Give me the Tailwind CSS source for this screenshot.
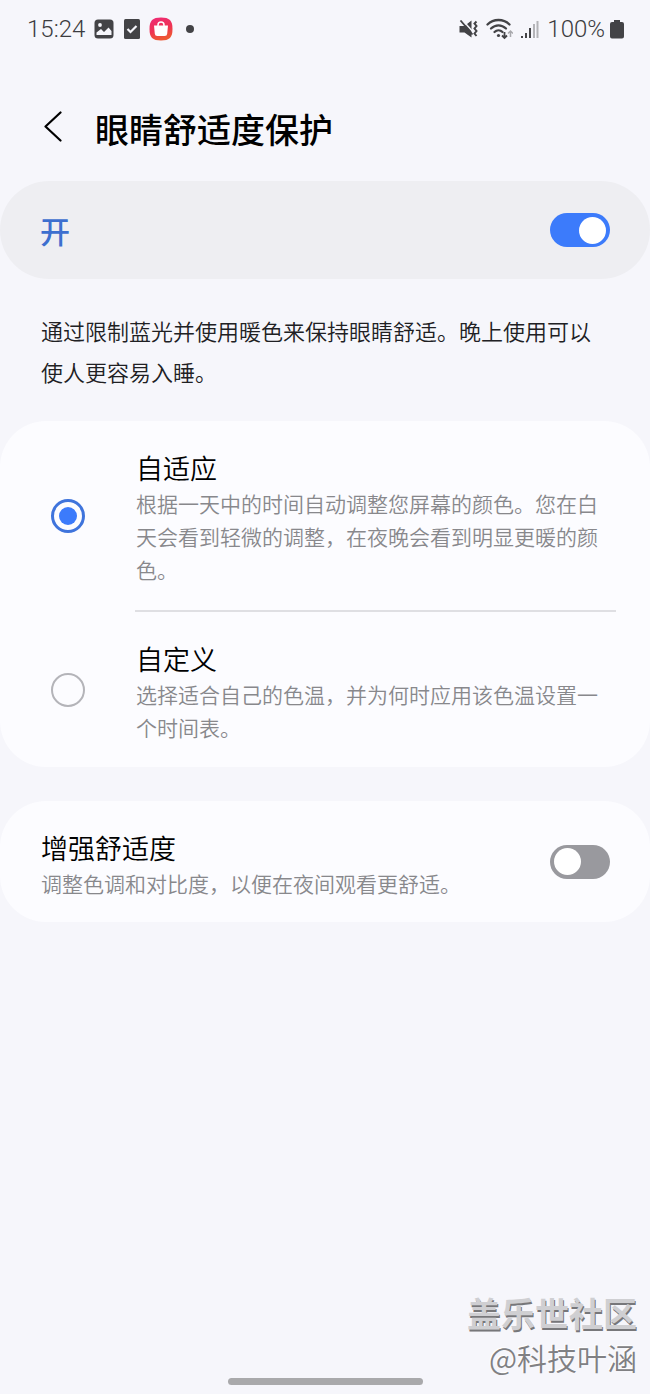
<!DOCTYPE html>
<html lang="zh-CN">
<head>
  <meta charset="UTF-8" />
  <meta name="viewport" content="width=device-width, initial-scale=1" />
  <title>眼睛舒适度保护</title>
  <script src="https://cdn.jsdelivr.net/npm/@tailwindcss/browser@4"></script>
</head>
<body class="bg-[#f6f6fb] min-h-screen flex flex-col text-black font-['Noto_Sans_CJK_SC',sans-serif]">
  <!-- Status bar -->
  <div class="h-[58px] pl-[27px] pr-[26px] flex items-center justify-between text-[#3c3c3f] font-['Roboto',sans-serif] text-2xl font-light">
    <div class="flex items-center">
      <span class="mr-[9px]">15:24</span>
      <svg class="w-5 h-5 mr-[9px]" viewBox="0 0 20 20">
        <rect x="0.500" y="0.500" width="19" height="19" rx="3.500" fill="#434346" />
        <circle cx="6" cy="6" r="1.900" fill="#f6f6fb" />
        <path d="M2.500 16v-2.500L7 10l3 3 4.500-4.500L17.500 12v4z" fill="#f6f6fb" />
      </svg>
      <svg class="w-[18px] h-5 mr-2" viewBox="0 0 18 20">
        <rect x="1" y="0" width="16" height="20" rx="1.500" fill="#434346" />
        <path d="M4.500 10l3 3L13.500 7" fill="none" stroke="#f6f6fb" stroke-width="2.200" />
      </svg>
      <svg class="w-6 h-6 mr-[13px]" viewBox="0 0 24 24">
        <defs>
          <linearGradient id="store" x1="0" y1="0" x2="0.300" y2="1">
            <stop offset="0" stop-color="#ef2a78" />
            <stop offset="0.600" stop-color="#ee3353" />
            <stop offset="1" stop-color="#ee5733" />
          </linearGradient>
        </defs>
        <path d="M12 .5C3.500.5.5 3.500.5 12S3.500 23.500 12 23.500 23.500 20.500 23.500 12 20.500.5 12 .5z" fill="url(#store)" />
        <path d="M9 9.500V8a3 3 0 0 1 6 0v1.500" fill="none" stroke="#fff" stroke-width="1.500" />
        <path d="M5 8.500h14l-.8 8.200a2.500 2.500 0 0 1-2.500 2.300H8.300a2.500 2.500 0 0 1-2.500-2.300z" fill="#fff" />
      </svg>
      <span class="w-2 h-2 rounded-full bg-[#434346]"></span>
    </div>
    <div class="flex items-center">
      <svg class="w-5 h-[18px] mr-[7px]" viewBox="0 0 20 18">
        <path d="M0.500 6h5L12.500 0.500v17L5.500 12.500h-5z" fill="#434346" />
        <path d="M3.500 0l11 12.500" stroke="#f6f6fb" stroke-width="1.500" />
        <path d="M1.500 0.500l12 14" stroke="#434346" stroke-width="1.800" />
        <path d="M17.500 1.500l-2 2 2 2.500-2 2.500 2 2.500-2 2.500 2 2.500" fill="none" stroke="#434346" stroke-width="2" />
      </svg>
      <svg class="w-[27px] h-[22px] mr-[7px]" viewBox="0 0 27 22">
        <g fill="none" stroke="#434346" stroke-width="2.300" stroke-linecap="round">
          <path d="M1.500 6.500C7.500.5 17.500.5 23.500 6.500" />
          <path d="M5 10.500c4.500-4.300 10.500-4.300 15 0" />
          <path d="M8.500 14c2.300-2.300 5.700-2.300 8 0" />
        </g>
        <circle cx="12.500" cy="17.500" r="1.600" fill="#434346" />
        <path d="M18.500 14v6M16 17.500l2.500 2.500 2.500-2.500" fill="none" stroke="#434346" stroke-width="1.800" />
        <path d="M24.500 19v-5M22 15.500l2.500-2.500 2.500 2.500" fill="none" stroke="#a9a9ad" stroke-width="1.500" />
      </svg>
      <svg class="w-[19px] h-[18px] mr-2" viewBox="0 0 19 18">
        <path d="M1 16h2v2H1zM5 13h2v5H5zM9 8h2v10H9z" fill="#434346" />
        <path d="M13 4h2v14h-2zM16.500 1h2v17h-2z" fill="#b4b4b8" />
      </svg>
      <span class="mr-[5px]">100%</span>
      <svg class="w-[14px] h-[19px]" viewBox="0 0 14 19">
        <path d="M4 0h6v2h2a2 2 0 0 1 2 2v12.500a2 2 0 0 1-2 2H2a2 2 0 0 1-2-2V4a2 2 0 0 1 2-2h2z" fill="#434346" />
      </svg>
    </div>
  </div>

  <!-- Title -->
  <header class="h-[123px] pl-[43px] pb-[34px] pt-12 flex items-center gap-8">
    <button type="button" aria-label="返回" class="cursor-pointer">
      <svg class="w-5 h-8" viewBox="0 0 20 32">
        <path d="M17.500 1.500L2.500 15.500l15 14" fill="none" stroke="#000" stroke-width="2.200" stroke-linecap="round" stroke-linejoin="round" />
      </svg>
    </button>
    <h1 class="pt-1 text-[34px] leading-10 font-medium">眼睛舒适度保护</h1>
  </header>

  <main>
    <label class="h-[98px] px-10 rounded-full bg-[#eeeef2] flex items-center justify-between cursor-pointer">
      <span class="text-[30px] font-medium text-[#3d6fcf]">开</span>
      <input type="checkbox" role="switch" checked
        class="appearance-none w-[60px] h-[34px] px-1 rounded-full bg-[#99999e] checked:bg-[#3c7bfb] flex items-center checked:justify-end before:block before:w-[27px] before:h-[27px] before:rounded-full before:bg-white cursor-pointer" />
    </label>

    <p class="px-[41px] pt-[31px] pb-[29px] text-[22px] leading-[41px] font-[350] text-[#202023]">通过限制蓝光并使用暖色来保持眼睛舒适。晚上使用可以使人更容易入睡。</p>

    <!-- Modes -->
    <section class="rounded-[46px] bg-[#fcfcff]">
      <label class="pl-[51px] pr-[34px] flex items-center cursor-pointer">
        <input type="radio" name="mode" checked
          class="appearance-none shrink-0 w-[34px] h-[34px] mr-[51px] rounded-full border-2 border-[#b4b4b9] checked:border-[3px] checked:border-[#3f74dc] flex items-center justify-center before:w-[18px] before:h-[18px] before:rounded-full checked:before:bg-[#3c7bfb] cursor-pointer" />
        <span class="block pt-7 pb-6">
          <span class="block text-[27px] leading-[38px] font-[350]">自适应</span>
          <span class="block text-[21px] leading-[33px] font-[350] text-[#88888c]">根据一天中的时间自动调整您屏幕的颜色。您在白天会看到轻微的调整，在夜晚会看到明显更暖的颜色。</span>
        </span>
      </label>
      <hr class="ml-[135px] mr-[34px] border-t-2 border-[#dfdfe3]" />
      <label class="pl-[51px] pr-[34px] flex items-center cursor-pointer">
        <input type="radio" name="mode"
          class="appearance-none shrink-0 w-[34px] h-[34px] mr-[51px] rounded-full border-2 border-[#b4b4b9] checked:border-[3px] checked:border-[#3f74dc] flex items-center justify-center before:w-[18px] before:h-[18px] before:rounded-full checked:before:bg-[#3c7bfb] cursor-pointer" />
        <span class="block pt-7 pb-[23px]">
          <span class="block text-[27px] leading-[38px] font-[350]">自定义</span>
          <span class="block text-[21px] leading-[33px] font-[350] text-[#88888c]">选择适合自己的色温，并为何时应用该色温设置一个时间表。</span>
        </span>
      </label>
    </section>

    <label class="mt-[34px] pl-[41px] pr-10 rounded-[46px] bg-[#fcfcff] flex items-center justify-between cursor-pointer">
      <span class="block pt-7 pb-[22px]">
        <span class="block text-[27px] leading-[38px] font-[350]">增强舒适度</span>
        <span class="block text-[21px] leading-[33px] font-[350] text-[#88888c]">调整色调和对比度，以便在夜间观看更舒适。</span>
      </span>
      <input type="checkbox" role="switch"
        class="appearance-none shrink-0 w-[60px] h-[34px] px-1 rounded-full bg-[#99999e] checked:bg-[#3c7bfb] flex items-center checked:justify-end before:block before:w-[27px] before:h-[27px] before:rounded-full before:bg-white cursor-pointer" />
    </label>
  </main>

  <footer class="mt-auto pb-[9px]">
    <div class="pr-[13px] text-right">
      <p class="text-[34px] leading-[46px] font-bold text-[#cfcfd2] [text-shadow:1px_2px_0_#77777a]">盖乐世社区</p>
      <p class="text-[30px] leading-[42px] font-[350] text-[#808083] [text-shadow:-1px_-1px_0_#ffffff]">@科技叶涵</p>
    </div>
    <div class="w-[30%] h-[7px] mx-auto rounded-full bg-[#a9a9ab]"></div>
  </footer>
</body>
</html>
